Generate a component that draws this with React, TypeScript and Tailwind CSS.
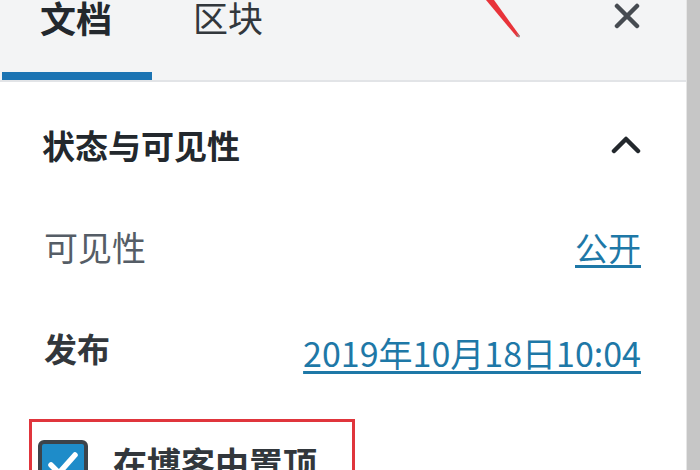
import React from 'react'

const font = { fontFamily: '"Noto Sans CJK SC", "Noto Sans", sans-serif' }

const CloseIcon = (): JSX.Element => (
  <svg width="26" height="26" viewBox="0 0 26 26" fill="none">
    <path d="M3 3L23 23M23 3L3 23" stroke="#464b51" strokeWidth="4.5" strokeLinecap="round" />
  </svg>
)

const ChevronUp = (): JSX.Element => (
  <svg width="30" height="18" viewBox="0 0 30 18" fill="none">
    <path d="M3 15L15 3L27 15" stroke="#23282d" strokeWidth="4.5" strokeLinecap="round" strokeLinejoin="round" />
  </svg>
)

const CheckMark = (): JSX.Element => (
  <svg width="34" height="30" viewBox="0 0 34 30" fill="none">
    <path d="M5 15L13 23L29 5" stroke="#ffffff" strokeWidth="5.5" strokeLinecap="round" strokeLinejoin="round" />
  </svg>
)

export default function App(): JSX.Element {
  return (
    <div className="w-[700px] h-[470px] overflow-hidden flex flex-row bg-white relative" style={font}>
      <div className="flex-1 flex flex-col min-w-0">
        <div className="h-[82px] bg-[#f3f4f5] border-b-2 border-[#e2e4e7] flex flex-row items-start">
          <div className="w-[150px] ml-[2px] h-[80px] border-b-8 border-[#1b74b3] pl-[38px]">
            <div className="text-[36px] leading-[34px] font-bold text-[#23282d]">文档</div>
          </div>
          <div className="pl-[41px] text-[35px] leading-[34px] text-[#32373c]">区块</div>
          <div className="flex-1" />
          <div className="mr-[46px] mt-[3px]">
            <CloseIcon />
          </div>
        </div>

        <div className="flex flex-row items-center justify-between pl-[42px] pr-[45px] pt-[43px]">
          <div className="text-[33px] leading-[40px] font-bold text-[#23282d]">状态与可见性</div>
          <ChevronUp />
        </div>

        <div className="flex flex-row items-center justify-between pl-[44px] pr-[45px] mt-[62px]">
          <div className="text-[34px] leading-[40px] text-[#555d66]">可见性</div>
          <a className="text-[33px] leading-[40px] text-[#1e78a7] underline underline-offset-4">公开</a>
        </div>

        <div className="flex flex-row items-start justify-between pl-[44px] pr-[45px] mt-[61px]">
          <div className="text-[33px] leading-[40px] font-bold text-[#32373c]">发布</div>
          <a className="text-[34px] leading-[40px] mt-[5px] text-[#1e78a7] underline underline-offset-4">
            2019年10月18日10:04
          </a>
        </div>

        <div className="ml-[29px] mt-[46px] w-[326px] border-[3px] border-[#e0353c] pl-[6px] pt-[18px] pb-4 flex flex-row items-start">
          <div className="w-[50px] h-[50px] rounded-md border-[4px] border-[#3c434a] bg-[#1e8cc9] flex items-center justify-center">
            <CheckMark />
          </div>
          <div className="ml-[25px] mt-[1px] text-[34px] leading-[44px] font-bold text-[#32373c]">在博客中置顶</div>
        </div>
      </div>
      <div className="w-[14px] h-full bg-[#c6c6c6] border-l border-[#e6e6e6]" />

      <svg className="absolute left-[484px] top-0" width="44" height="42" viewBox="0 0 44 42" fill="none">
        <path d="M2 0L10 0L36 36L33 37Z" fill="#e8333a" />
        <path d="M32 33L36 36L35 38Z" fill="#8a8a8a" />
      </svg>
    </div>
  )
}
